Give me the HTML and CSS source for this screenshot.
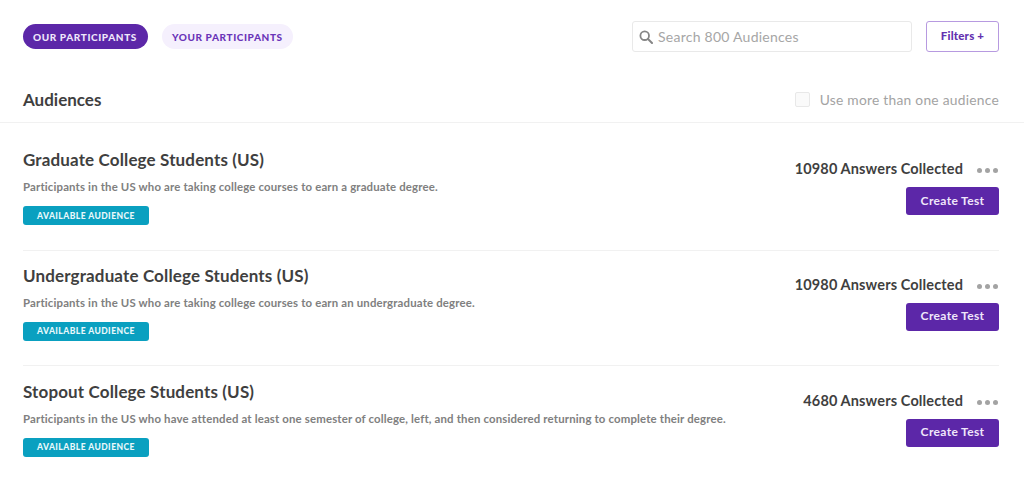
FILE: index.html
```html
<!DOCTYPE html>
<html lang="en">
<head>
<meta charset="utf-8">
<title>Audiences</title>
<link rel="stylesheet" href="styles.css">
</head>
<body>
<div class="page">
  <div class="toolbar">
    <div class="tabs">
      <a class="tab tab-active">OUR PARTICIPANTS</a>
      <a class="tab tab-idle">YOUR PARTICIPANTS</a>
    </div>
    <div class="tools">
      <div class="search">
        <svg class="search-icon" viewBox="0 0 14 14" width="14" height="14"><circle cx="5.7" cy="5.7" r="4.3" fill="none" stroke="#858585" stroke-width="1.8"/><path d="M9 9l4 4" stroke="#858585" stroke-width="2" stroke-linecap="round"/></svg>
        <span>Search 800 Audiences</span>
      </div>
      <button class="filters">Filters +</button>
    </div>
  </div>
  <div class="heading">
    <h1>Audiences</h1>
    <label class="multi"><span class="check"></span>Use more than one audience</label>
  </div>
  <div class="list">
    <div class="row">
      <div class="info">
        <h2>Graduate College Students (US)</h2>
        <p>Participants in the US who are taking college courses to earn a graduate degree.</p>
        <span class="badge">AVAILABLE AUDIENCE</span>
      </div>
      <div class="actions">
        <div class="stat"><strong>10980 Answers Collected</strong><span class="dots"><i></i><i></i><i></i></span></div>
        <button class="create">Create Test</button>
      </div>
    </div>
    <div class="row">
      <div class="info">
        <h2>Undergraduate College Students (US)</h2>
        <p>Participants in the US who are taking college courses to earn an undergraduate degree.</p>
        <span class="badge">AVAILABLE AUDIENCE</span>
      </div>
      <div class="actions">
        <div class="stat"><strong>10980 Answers Collected</strong><span class="dots"><i></i><i></i><i></i></span></div>
        <button class="create">Create Test</button>
      </div>
    </div>
    <div class="row row-last">
      <div class="info">
        <h2>Stopout College Students (US)</h2>
        <p>Participants in the US who have attended at least one semester of college, left, and then considered returning to complete their degree.</p>
        <span class="badge">AVAILABLE AUDIENCE</span>
      </div>
      <div class="actions">
        <div class="stat"><strong>4680 Answers Collected</strong><span class="dots"><i></i><i></i><i></i></span></div>
        <button class="create">Create Test</button>
      </div>
    </div>
  </div>
</div>
</body>
</html>
```
FILE: styles.css
```css
* { box-sizing: border-box; }
html, body { margin: 0; height: 100%; background: #fff; overflow: hidden; }
body { font-family: "Lato", "Liberation Sans", sans-serif; color: #3c3c3c; }
.page { padding: 21px 25px 0 23px; }

.toolbar { display: flex; justify-content: space-between; align-items: center; height: 31px; }
.tabs { display: flex; gap: 14px; }
.tab { display: flex; align-items: center; height: 25px; border-radius: 13px; padding: 0 10px; font-size: 10px; font-weight: 900; letter-spacing: .6px; white-space: nowrap; }
.tab-active { background: #5c27a8; color: #efe6fa; width: 125px; }
.tab-idle { background: #f5f0fd; color: #6a35b8; width: 131px; }
.tools { display: flex; gap: 14px; }
.search { display: flex; align-items: center; gap: 5px; width: 280px; height: 31px; padding-left: 6px; border: 1px solid #e9e9e9; border-radius: 3px; font-size: 14px; letter-spacing: .25px; color: #a6a6a6; }
.filters { width: 73px; height: 31px; padding: 0 0 2px; background: #fff; border: 1px solid #b79ae0; border-radius: 3px; font: 900 11.5px "Lato", sans-serif; letter-spacing: .2px; color: #6331b0; }

.heading { display: flex; justify-content: space-between; align-items: center; height: 71px; padding: 24px 25px 0 23px; margin: 0 -25px 0 -23px; border-bottom: 1px solid #f1f1f1; }
h1 { margin: 0; font-size: 17px; font-weight: 700; color: #3f3f3f; }
.multi { display: flex; align-items: center; font-size: 13.8px; letter-spacing: .25px; color: #a3a3a3; }
.check { width: 15px; height: 15px; margin-right: 10px; background: #fafafa; border: 1px solid #e8e8e8; border-radius: 2px; }

.list { padding-top: 12px; }
.row { display: flex; justify-content: space-between; height: 115.7px; border-bottom: 1px solid #f1f1f1; }
.row-last { border-bottom: 0; padding-top: .6px; }
.info { padding-top: 15px; }
h2 { margin: 0; font-size: 17px; line-height: 20px; font-weight: 700; letter-spacing: .14px; color: #3f3f3f; }
.info p { margin: 10px 0 0; font-size: 11.4px; line-height: 14px; font-weight: 700; letter-spacing: .16px; color: #808080; }
.badge { display: flex; align-items: center; justify-content: center; width: 126px; height: 19px; margin-top: 12px; background: #0aa0c0; border-radius: 3px; font-size: 8.5px; font-weight: 900; letter-spacing: .45px; color: #e8f8fb; }

.actions { display: flex; flex-direction: column; align-items: flex-end; padding-top: 25px; }
.stat { display: flex; align-items: center; height: 18px; margin-top: -.6px; padding-right: 1px; }
.stat strong { font-size: 14.5px; font-weight: 700; letter-spacing: .13px; color: #3f3f3f; }
.dots { display: flex; gap: 3px; margin-left: 14px; margin-top: 4px; }
.dots i { width: 5px; height: 5px; border-radius: 50%; background: #a3a3a3; }
.create { width: 93px; height: 28px; margin-top: 9.6px; padding: 0 0 2px; background: #5c27a8; border: 0; border-radius: 3px; font: 700 12px "Lato", sans-serif; letter-spacing: .35px; color: #efe6fa; }
```
